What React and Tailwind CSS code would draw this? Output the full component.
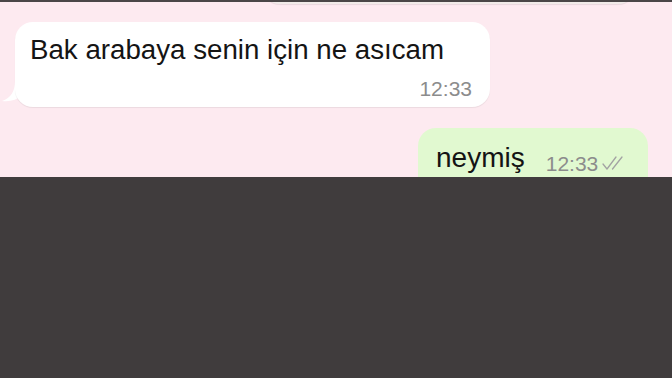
export default function App() {
  return (
    <div className="w-[672px] h-[378px] flex flex-col bg-[#403c3d] overflow-hidden" style={{ fontFamily: '"Liberation Sans", Arial, sans-serif' }}>
      <div className="h-[2px] bg-[#4a4647]" />
      <div className="relative h-[175px] bg-[#fdeaf0] overflow-hidden">
        {/* previous bubble edge */}
        <div className="absolute left-[262px] top-[-40px] w-[374px] h-[42px] rounded-[18px] bg-[#f1ebe9] shadow-[0_1px_1px_rgba(0,0,0,0.08)]" />

        <div className="flex flex-col pt-[20px]">
          {/* incoming */}
          <div className="relative ml-[15px] self-start">
            <svg className="absolute left-[-13px] bottom-[4px]" width="22" height="22" viewBox="0 0 22 22">
              <path d="M13 0 C13 10 9 17 0 20 C8 21 15 19 20 14 Z" fill="#ffffff" />
            </svg>
            <div className="relative w-[475px] h-[85px] rounded-[18px] bg-white shadow-[0_1px_1px_rgba(0,0,0,0.07)] pl-[15px] pt-[11px]">
              <div className="text-[27.7px] leading-[34px] text-[#141414]">Bak arabaya senin için ne asıcam</div>
              <div className="absolute right-[18px] bottom-[8px] text-[21px] leading-[21px] text-[#8c8c8c]">12:33</div>
            </div>
          </div>

          {/* outgoing */}
          <div className="mt-[21px] ml-[418px] w-[230px] h-[70px] rounded-[18px] bg-[#e1f9d0] flex items-start pl-[18px] pt-[13px]">
            <span className="text-[28px] leading-[34px] text-[#141414]">neymiş</span>
            <span className="ml-[21px] mt-[12px] text-[21px] leading-[21px] text-[#8c8c8c]">12:33</span>
            <svg className="ml-[3px] mt-[14px]" width="28" height="16" viewBox="0 0 28 16" fill="none" stroke="#a3a3a3" strokeWidth="1.3" strokeLinecap="round" strokeLinejoin="round">
              <path d="M2 9 L6 14 L15 2" />
              <path d="M11.5 14 L21 2" />
            </svg>
          </div>
        </div>
      </div>
      <div className="flex-1 bg-[#403c3d]" />
    </div>
  );
}
